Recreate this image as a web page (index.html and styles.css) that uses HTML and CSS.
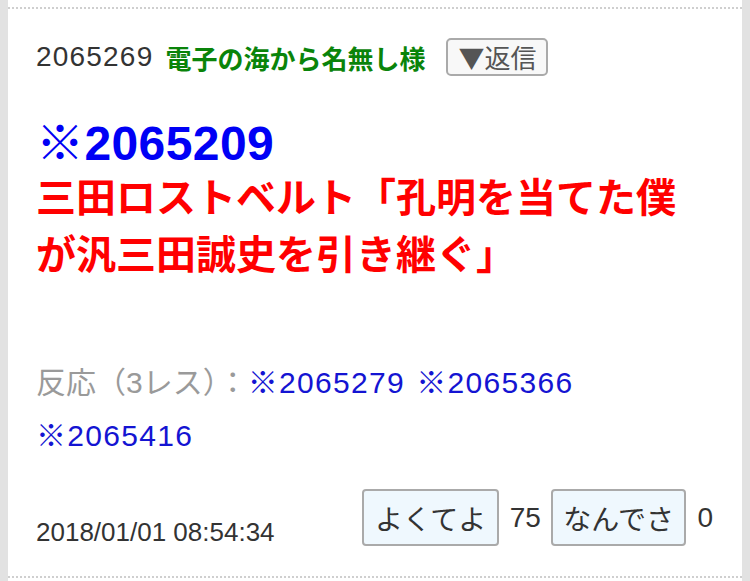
FILE: index.html
```html
<!DOCTYPE html>
<html lang="ja">
<head>
    <meta charset="UTF-8">
    <meta name="viewport" content="width=device-width, initial-scale=1.0">
    <title>レス 2065269</title>
    <link rel="stylesheet" href="styles.css">
</head>
<body>
    <div class="thread">
        <div class="res">
            <div class="res_head">
                <span class="res_no">2065269</span>
                <span class="res_name">電子の海から名無し様</span>
                <button class="btn_reply">▼返信</button>
            </div>

            <div class="res_body">
                <div class="anchor"><a href="#">※2065209</a></div>
                <div class="res_text">三田ロストベルト「孔明を当てた僕が汎三田誠史を引き継ぐ」</div>
            </div>

            <div class="reactions">
                <span class="label">反応（3レス）：</span><a href="#">※2065279</a> <a href="#">※2065366</a> <a href="#">※2065416</a>
            </div>

            <div class="res_foot">
                <span class="date">2018/01/01 08:54:34</span>
                <span class="votes">
                    <button class="btn_vote">よくてよ</button>
                    <span class="count">75</span>
                    <button class="btn_vote">なんでさ</button>
                    <span class="count">0</span>
                </span>
            </div>
        </div>
    </div>
</body>
</html>
```

FILE: styles.css
```css
* {
    margin: 0;
    padding: 0;
    box-sizing: border-box;
}

body {
    background-color: #e2e2e2;
    font-family: "Liberation Sans", "Noto Sans CJK JP", sans-serif;
    color: #333;
}

.thread {
    margin: 0 8px;
    padding-top: 7px;
    height: 581px;
    background-color: white;
}

.res {
    border-top: 2px dotted #cfcfcf;
    border-bottom: 2px dotted #cfcfcf;
    padding: 29px 28px 30px;
}

.res_head {
    display: flex;
    align-items: center;
    height: 38px;
}

.res_no {
    font-size: 28px;
    letter-spacing: 1.2px;
    color: #333;
}

.res_name {
    margin-left: 12px;
    font-size: 26px;
    font-weight: bold;
    color: #0a840a;
}

.btn_reply {
    margin-left: 21px;
    height: 38px;
    padding: 0 10px;
    font-family: "Noto Sans CJK JP", sans-serif;
    font-size: 26px;
    line-height: 1;
    color: #555;
    background-color: #f8f8f8;
    border: 2px solid #aaa;
    border-radius: 5px;
}

.res_body {
    margin-top: 39px;
    font-weight: bold;
}

.anchor {
    font-size: 48px;
    line-height: 58px;
    letter-spacing: 0.4px;
}

.anchor a {
    color: #0000f5;
    text-decoration: none;
}

.res_text {
    margin-top: -3px;
    font-size: 40px;
    line-height: 57px;
    color: #f00;
}

.reactions {
    margin-top: 72px;
    font-size: 30px;
    line-height: 53px;
}

.reactions .label {
    color: #9a9a9a;
}

.reactions a {
    margin-right: 3px;
    color: #1414d2;
    text-decoration: none;
    letter-spacing: 1.3px;
}

.res_foot {
    margin-top: 27px;
    display: flex;
    justify-content: space-between;
    align-items: flex-end;
}

.date {
    font-size: 26px;
    line-height: 26px;
    padding-bottom: 1px;
    color: #333;
}

.votes {
    display: flex;
    align-items: center;
}

.btn_vote {
    height: 57px;
    padding: 0 10.5px;
    font-family: inherit;
    font-size: 28px;
    color: #333;
    background-color: #eff8fe;
    border: 2px solid #aaa;
    border-radius: 4px;
}

.count {
    font-size: 28px;
    margin: 0 10px 0 11px;
}

.count:last-child {
    margin-right: 1px;
}
```
